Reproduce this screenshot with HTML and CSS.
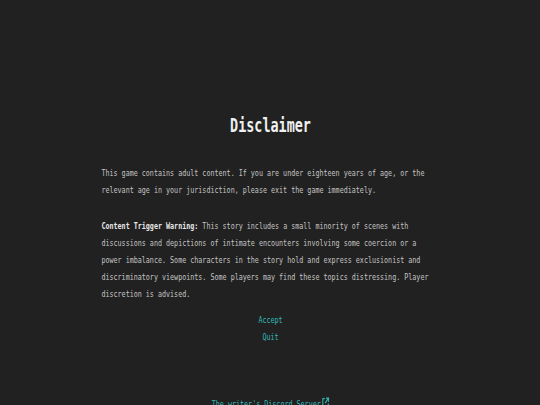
FILE: index.html
```html
<!DOCTYPE html>
<html lang="en">
<head>
  <meta charset="UTF-8">
  <title>Disclaimer</title>
  <link rel="stylesheet" href="styles.css">
</head>
<body>
  <div class="screen">
    <h1 class="title">Disclaimer</h1>

    <p>This game contains adult content. If you are under eighteen years of age, or the relevant age in your jurisdiction, please exit the game immediately.</p>

    <p><strong>Content Trigger Warning:</strong> This story includes a small minority of scenes with discussions and depictions of intimate encounters involving some coercion or a power imbalance. Some characters in the story hold and express exclusionist and discriminatory viewpoints. Some players may find these topics distressing. Player discretion is advised.</p>

    <div class="choices">
      <a href="#">Accept</a>
      <a href="#">Quit</a>
    </div>

    <div class="footer">
      <a href="#">The writer's Discord Server<svg class="ext" viewBox="0 0 10 10" width="11" height="11"><path d="M4 1.5H1.5v7h7V6" fill="none" stroke="currentColor" stroke-width="1.3"/><path d="M5.5 1h3.5v3.5M9 1L4.5 5.5" fill="none" stroke="currentColor" stroke-width="1.3"/></svg></a>
    </div>
  </div>
</body>
</html>
```

FILE: styles.css
```css
body {
  margin: 0;
  background-color: #212121;
  color: #c4c4c4;
  font-family: "DejaVu Sans Mono", "Liberation Mono", monospace;
  font-size: 9.5px;
  line-height: 17px;
  height: 405px;
  overflow: hidden;
}
/* narrow mono look: lay out wide, then squeeze horizontally */
.screen {
  width: 479px;
  margin: 0 auto;
  padding-top: 113px;
  display: flex;
  flex-direction: column;
  transform: scaleX(0.706);
  transform-origin: top center;
}
.title {
  margin: 0 0 27px;
  text-align: center;
  font-size: 19px;
  line-height: 24px;
  font-weight: bold;
  color: #f0f0f0;
}
p {
  margin: 0 0 19px;
}
strong {
  color: #e6e6e6;
}
.choices {
  display: flex;
  flex-direction: column;
  align-items: center;
  margin-top: -10px;
}
a {
  color: #34b8b8;
  text-decoration: none;
}
.footer {
  margin-top: 50px;
  text-align: center;
}
.footer .ext {
  margin-left: 1px;
  vertical-align: -1px;
}
```
